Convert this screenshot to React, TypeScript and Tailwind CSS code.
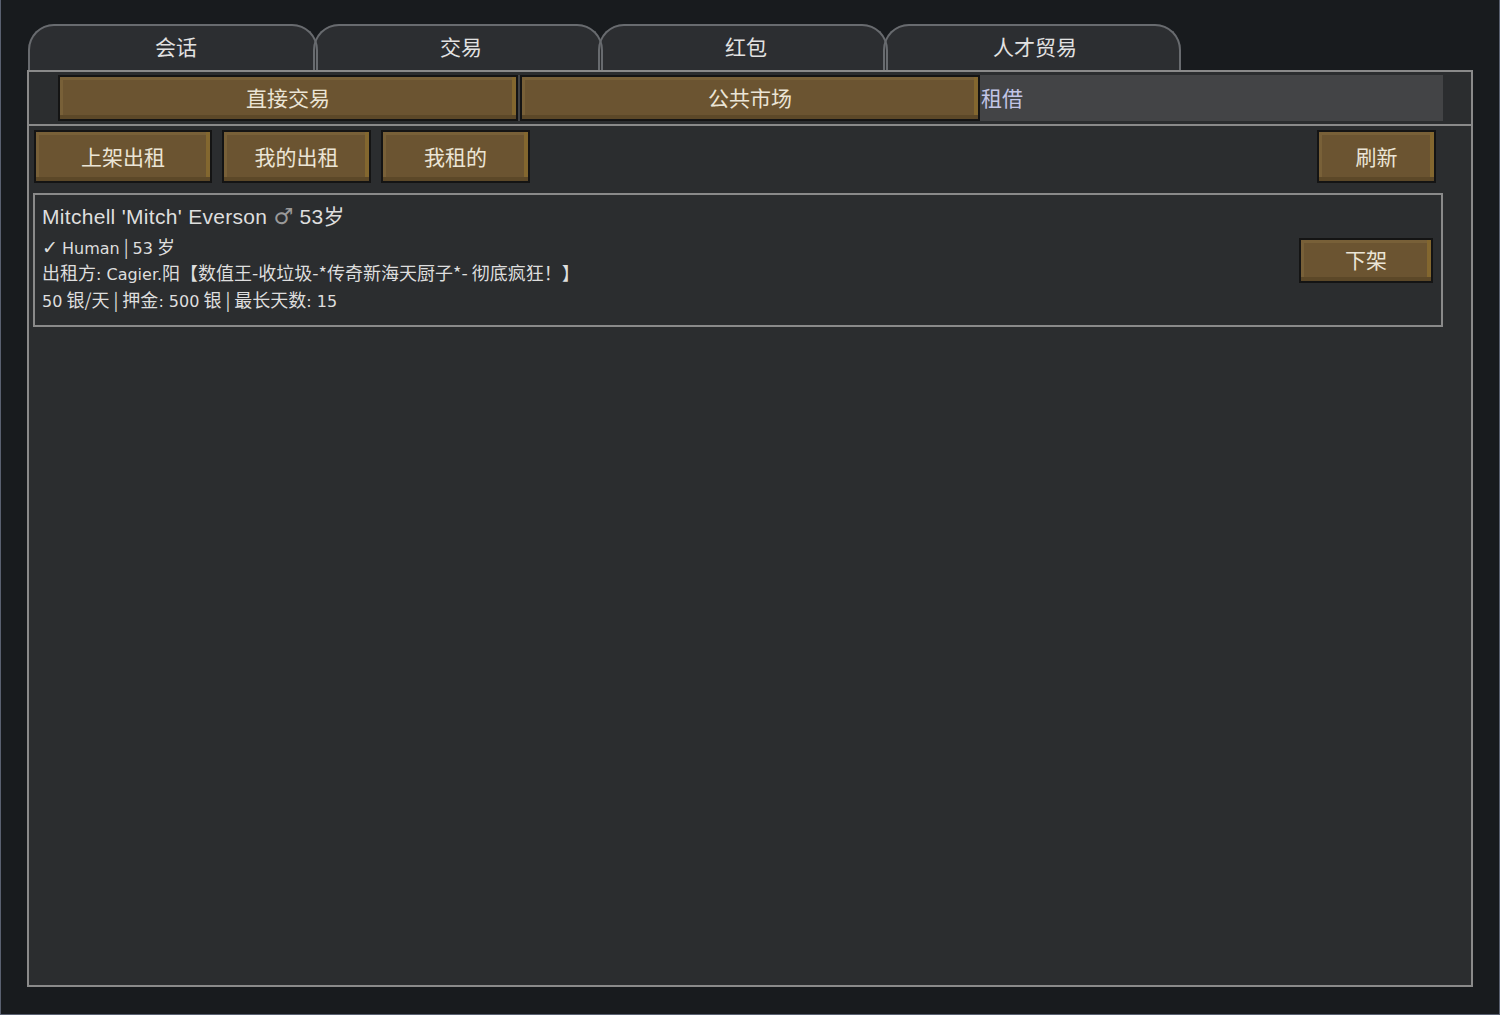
const btn =
  "flex items-center justify-center border-2 border-[#141414] bg-[#6b5431] text-[21px] text-[#ebe5d6] shadow-[inset_0_-4px_0_#5c4828,inset_-4px_0_0_#83672f,inset_3px_3px_0_#786038] font-['Noto_Sans_CJK_SC',sans-serif]"

const tabs = ['会话', '交易', '红包', '人才贸易']

const latin = "font-['DejaVu_Sans',sans-serif] text-[16px]"
const line = 'h-[27px] text-[18px] leading-[27px] whitespace-nowrap'

export default function App() {
  return (
    <div className="w-[1500px] h-[1015px] bg-[#181b1e] border-l border-b border-r border-[#596070] font-['Noto_Sans_CJK_SC',sans-serif] overflow-hidden">
      <div className="pl-[26px] pt-[24px]">
        {/* top tabs */}
        <div className="flex h-[46px] pl-[1px]">
          {tabs.map((t, i) => (
            <div
              key={t}
              className={`relative w-[290px] h-[46px] rounded-t-[26px] bg-[#2c2e31] flex items-center justify-center text-[21px] text-[#e2e2e2] ${i > 0 ? '-ml-[5px]' : ''} ${i === 3 ? 'w-[298px]' : ''}`}
            >
              <div className="absolute inset-0 z-10 rounded-t-[26px] border-2 border-b-0 border-[#686b6f] pointer-events-none" />
              <span className="relative z-20 pl-[6px]">{t}</span>
            </div>
          ))}
        </div>

        {/* main panel */}
        <div className="w-[1446px] h-[917px] border-2 border-[#8a8a8a] bg-[#2b2d2f]">
          {/* sub tabs */}
          <div className="mt-[3px] ml-[29px] w-[1385px] h-[46px] bg-[#434446] flex">
            <div className={`${btn} w-[460px] h-full`}>直接交易</div>
            <div className={`${btn} w-[460px] h-full ml-[2px]`}>公共市场</div>
            <div className="flex items-center pl-[1px] text-[21px] text-[#c2c5e6]">租借</div>
          </div>

          <div className="mt-[3px] h-[2px] bg-[#8a8a8a]" />

          {/* action row */}
          <div className="mt-[4px] px-[5px] flex gap-[10px] h-[53px]">
            <div className={`${btn} w-[178px] h-full`}>上架出租</div>
            <div className={`${btn} w-[149px] h-full`}>我的出租</div>
            <div className={`${btn} w-[149px] h-full`}>我租的</div>
            <div className={`${btn} w-[119px] h-full ml-auto mr-[30px]`}>刷新</div>
          </div>

          {/* listing card */}
          <div className="mt-[10px] ml-[4px] w-[1410px] h-[134px] border-2 border-[#8a8a8a] flex pl-[7px] pr-[8px]">
            <div className="flex-1 pt-[7px] text-[#dedede]">
              <div className="h-[30px] text-[21px] leading-[30px] tracking-[0.3px] whitespace-nowrap font-['Liberation_Sans','Noto_Sans_CJK_SC',sans-serif]">
                Mitchell 'Mitch' Everson{' '}
                <span className="text-[#9a9a9a] text-[22px] font-['DejaVu_Sans',sans-serif]">♂</span> 53岁
              </div>
              <div className={`${line} mt-[1px]`}>
                <span className="font-['DejaVu_Sans',sans-serif] text-[19px]">✓</span>{' '}
                <span className={latin}>Human</span> | <span className={latin}>53</span> 岁
              </div>
              <div className={`${line} -mt-[1px]`}>
                出租方<span className={latin}>: Cagier.</span>阳【数值王-收垃圾-*传奇新海天厨子*- 彻底疯狂！】
              </div>
              <div className={line}>
                <span className={latin}>50</span> 银/天 | 押金<span className={latin}>: 500</span> 银 | 最长天数<span className={latin}>: 15</span>
              </div>
            </div>
            <div className={`${btn} self-center w-[134px] h-[45px]`}>下架</div>
          </div>
        </div>
      </div>
    </div>
  )
}
